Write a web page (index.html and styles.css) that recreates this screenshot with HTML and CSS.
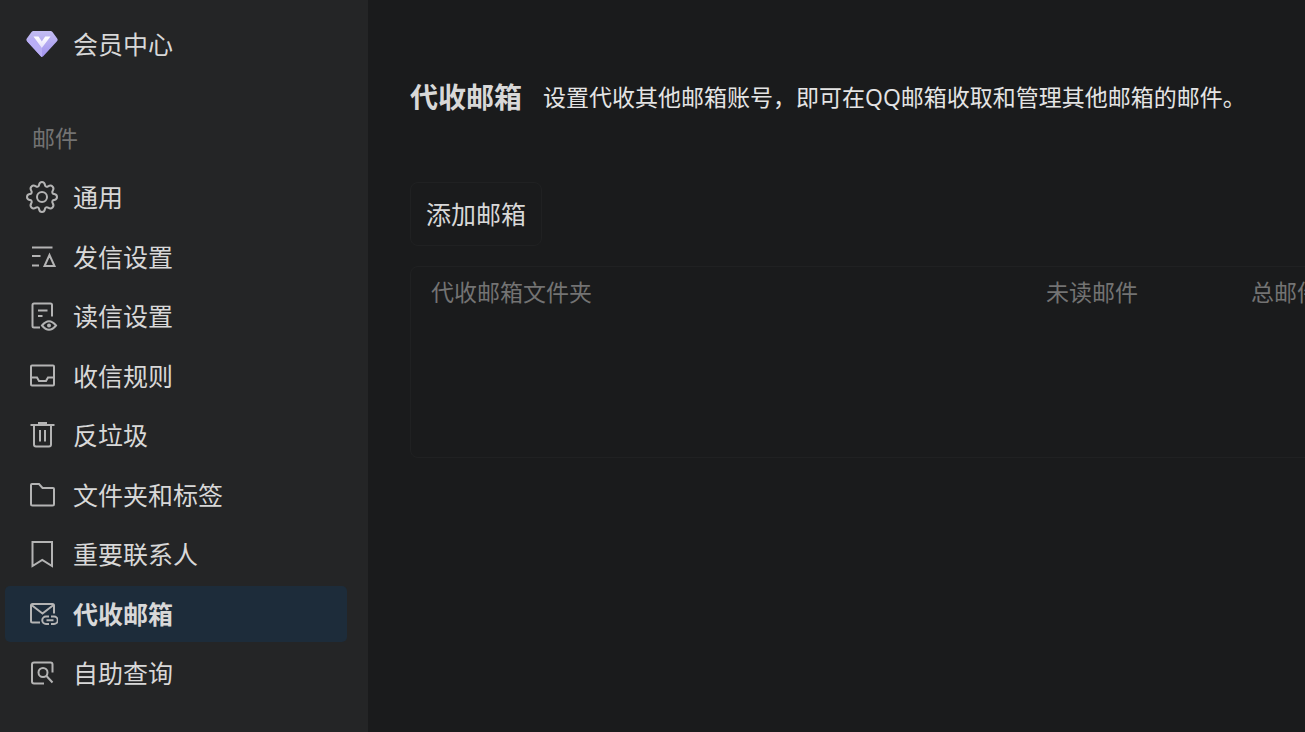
FILE: index.html
```html
<!DOCTYPE html>
<html lang="zh-CN">
<head>
<meta charset="utf-8">
<title>代收邮箱</title>
<link rel="stylesheet" href="styles.css">
</head>
<body>
<div class="layout">
  <aside class="sidebar">
    <a class="nav-link vip" href="#">
      <svg class="icon" viewBox="0 0 32 32">
        <defs>
          <linearGradient id="gem" x1="0" y1="0" x2="0" y2="1"><stop offset="0" stop-color="#c3bdf3"/><stop offset="1" stop-color="#a293ee"/></linearGradient>
          <linearGradient id="vee" x1="0" y1="0" x2="0" y2="1"><stop offset="0" stop-color="#fff"/><stop offset="1" stop-color="#e4defc"/></linearGradient>
        </defs>
        <path d="M7.500 3h17q1.200 0 2 1l4.700 6.500q1 1.400-.2 2.700L17.200 28.200q-1.200 1.300-2.400 0L1 13.200q-1.200-1.300-.2-2.700l4.700-6.500q.8-1 2-1z" fill="url(#gem)"/>
        <path d="M1 13.200L7 10l9 10v9q-.6 0-1.200-.8z" fill="#b9aef5"/>
        <path d="M7.500 8.500h5l3.300 5 3.400-5H24.500l-8.700 11.500z" fill="url(#vee)"/>
      </svg>
      <span>会员中心</span>
    </a>
    <h2 class="group-title">邮件</h2>
    <nav class="nav">
      <a class="nav-link" href="#">
        <svg class="icon" viewBox="0 0 32 32"><path d="M16 1C18.600 1 18.600 2.200 19 4.200C19.300 5.600 20.800 6.200 22 5.400C23.700 4.300 24.700 3.600 26.500 5.500C28.400 7.300 27.700 8.300 26.600 10C25.800 11.200 26.400 12.700 27.800 13C29.800 13.400 31 13.400 31 16C31 18.600 29.800 18.600 27.800 19C26.400 19.300 25.800 20.800 26.600 22C27.700 23.700 28.400 24.700 26.500 26.500C24.700 28.400 23.700 27.700 22 26.600C20.800 25.800 19.300 26.400 19 27.800C18.600 29.800 18.600 31 16 31C13.400 31 13.400 29.800 13 27.800C12.700 26.400 11.200 25.800 10 26.600C8.300 27.700 7.300 28.400 5.500 26.500C3.600 24.700 4.300 23.700 5.400 22C6.200 20.800 5.600 19.300 4.200 19C2.200 18.600 1 18.600 1 16C1 13.400 2.200 13.400 4.200 13C5.600 12.700 6.200 11.200 5.400 10C4.300 8.300 3.600 7.300 5.500 5.500C7.300 3.600 8.300 4.300 10 5.400C11.200 6.200 12.700 5.600 13 4.200C13.400 2.200 13.400 1 16 1z"/><circle cx="16" cy="16" r="5"/></svg>
        <span>通用</span>
      </a>
      <a class="nav-link" href="#">
        <svg class="icon" viewBox="0 0 32 32"><path d="M6 6.500h20.500M6 15h8.500M6 24.500h7M23.500 14l-5 11h10z"/></svg>
        <span>发信设置</span>
      </a>
      <a class="nav-link" href="#">
        <svg class="icon" viewBox="0 0 32 32"><path d="M14 27.500H8q-1.500 0-1.500-1.500V5Q6.500 3.500 8 3.500h16.500Q26 3.500 26 5v11.500M12 10.500h9.500M12 16h4.500"/><path d="M16 25.500q7-8.500 14 0q-7 8.500-14 0z"/><circle class="solid" cx="23" cy="25.500" r="2"/></svg>
        <span>读信设置</span>
      </a>
      <a class="nav-link" href="#">
        <svg class="icon" viewBox="0 0 32 32"><rect x="5" y="5.500" width="23" height="20" rx="1"/><path d="M5 17.500h6l2 3.500h7l2-3.500h6"/></svg>
        <span>收信规则</span>
      </a>
      <a class="nav-link" href="#">
        <svg class="icon" viewBox="0 0 32 32"><path d="M4.500 6h24M13 5.500V4h7V5.500M8 6V25.500q0 2 2 2h13q2 0 2-2V6M14 11v11.500M19 11v11.500"/></svg>
        <span>反垃圾</span>
      </a>
      <a class="nav-link" href="#">
        <svg class="icon" viewBox="0 0 32 32"><path d="M5 6Q5 5 6 5h7l3.500 4H27q1 0 1 1V25q0 1.500-1.500 1.500H6.500Q5 26.500 5 25z"/></svg>
        <span>文件夹和标签</span>
      </a>
      <a class="nav-link" href="#">
        <svg class="icon" viewBox="0 0 32 32"><path d="M6.500 4H26v24l-9.750-6-9.750 6z"/></svg>
        <span>重要联系人</span>
      </a>
      <a class="nav-link active" href="#" aria-current="page">
        <svg class="icon" viewBox="0 0 32 32"><path d="M14 24.500H6.500Q5 24.500 5 23V7.500Q5 6 6.500 6h20Q28 6 28 7.500V15.500M5.500 7l11 8.500 11-8.500"/><path d="M23 18.500h-3a3.750 3.750 0 0 0 0 7.500h3M25 18.500h3a3.750 3.750 0 0 1 0 7.500h-3M20.500 22.250h7"/></svg>
        <span>代收邮箱</span>
      </a>
      <a class="nav-link" href="#">
        <svg class="icon" viewBox="0 0 32 32"><path d="M18 26.500H8q-2 0-2-2V7.500q0-2 2-2h16.500q2 0 2 2V15.500"/><circle cx="17" cy="15.500" r="4.500"/><path d="M20.500 19l6 6.500"/></svg>
        <span>自助查询</span>
      </a>
    </nav>
  </aside>
  <main class="content">
    <header class="page-head">
      <h1>代收邮箱</h1>
      <p>设置代收其他邮箱账号，即可在QQ邮箱收取和管理其他邮箱的邮件。</p>
    </header>
    <button class="add" type="button">添加邮箱</button>
    <div class="panel">
      <table class="table">
        <thead>
          <tr><th class="col-name">代收邮箱文件夹</th><th class="col-unread">未读邮件</th><th class="col-total">总邮件</th></tr>
        </thead>
      </table>
    </div>
  </main>
</div>
</body>
</html>
```
FILE: styles.css
```css
* { box-sizing: border-box; }
body {
  margin: 0;
  background: #1a1b1c;
  color: #d8d8d8;
  font-family: "Open Sans", "Noto Sans CJK SC", sans-serif;
  font-size: 25px;
  line-height: 32px;
}
h1, h2, p { margin: 0; }
.layout { display: flex; min-height: 100vh; overflow: hidden; }
.sidebar {
  flex: 0 0 368px;
  padding: 16px 21px 30px 5px;
  background: #242526;
}
.nav-link {
  display: flex;
  align-items: center;
  gap: 15px;
  height: 56px;
  padding: 0 21px;
  border-radius: 5px;
  color: inherit;
  text-decoration: none;
}
.nav {
  display: flex;
  flex-direction: column;
  justify-content: space-between;
  min-height: 532px;
}
.active { background: #1d2c3a; font-weight: 700; }
.icon {
  flex: none;
  width: 32px;
  height: 32px;
  fill: none;
  stroke: #b4b4b4;
  stroke-width: 2;
}
.vip .icon { stroke: none; }
.icon .solid { fill: #b4b4b4; stroke: none; }
.group-title {
  padding: 50px 27px 15px;
  color: #737373;
  font-size: 23px;
  font-weight: 400;
}
.content { flex: 1; min-width: 0; padding: 77px 0 0 42px; }
.page-head { display: flex; align-items: center; gap: 21px; line-height: 40px; }
h1 { flex: none; font-size: 28px; }
.page-head p { font-size: 23px; white-space: nowrap; color: #e4e4e4; }
.add {
  display: block;
  height: 64px;
  margin: 65px 0 20px;
  padding: 0 15px;
  border: 1px solid #202122;
  border-radius: 8px;
  background: none;
  color: inherit;
  font: inherit;
}
.panel {
  min-width: 1000px;
  min-height: 192px;
  border: 1px solid #202122;
  border-radius: 8px;
}
.table {
  width: 100%;
  table-layout: fixed;
  border-collapse: collapse;
  color: #737373;
  font-size: 23px;
}
.table th { height: 50px; padding: 0 0 0 20px; font-weight: 400; text-align: left; }
.table .col-name { width: 615px; }
.table .col-unread { width: 205px; }
```
